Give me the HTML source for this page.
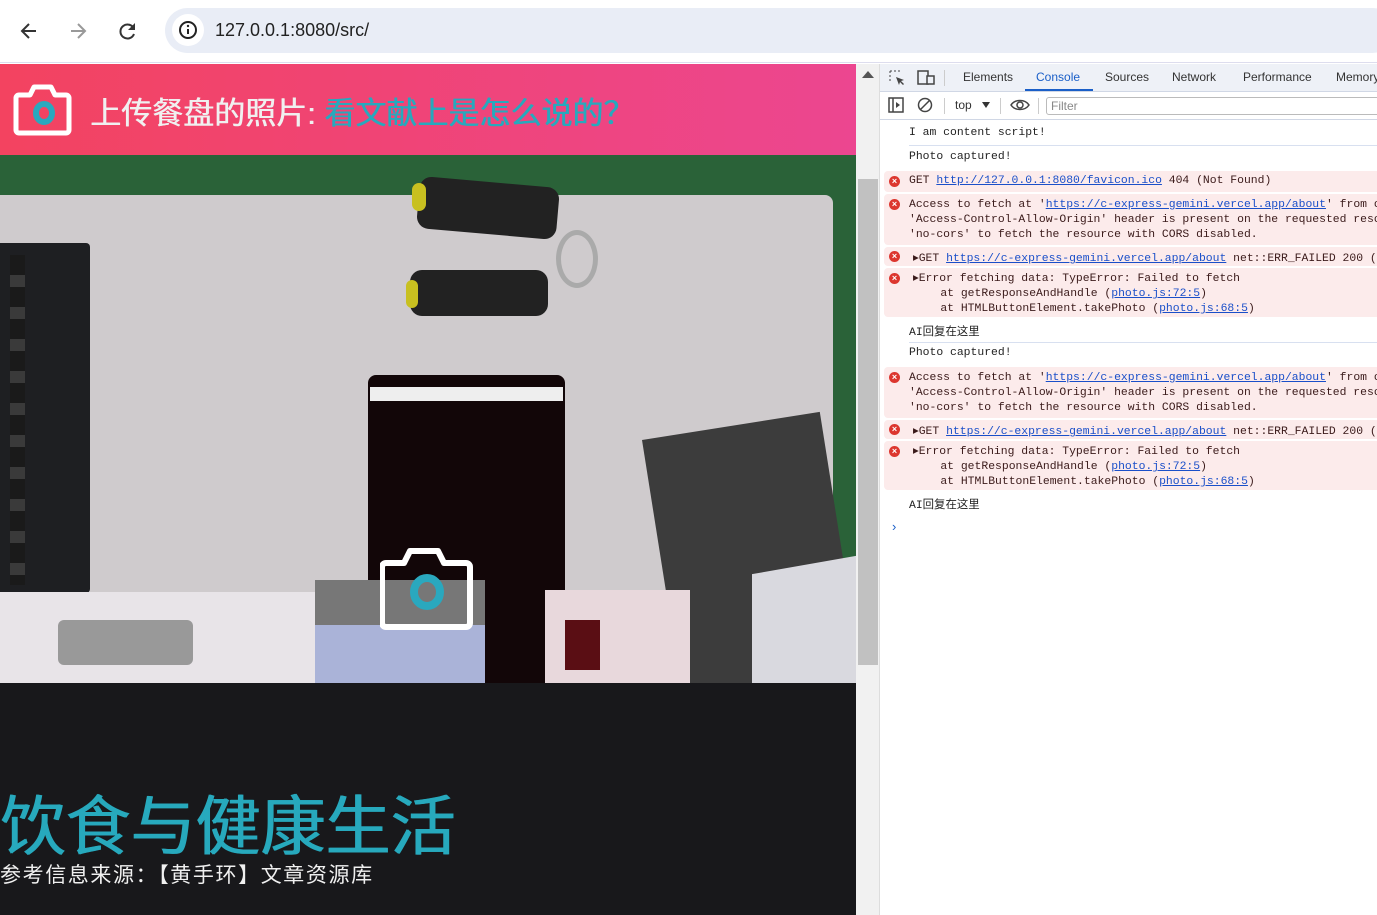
<!DOCTYPE html>
<html><head><meta charset="utf-8"><style>
*{margin:0;padding:0;box-sizing:border-box}
body{width:1377px;height:915px;overflow:hidden;background:#fff;font-family:"Liberation Sans","Noto Sans CJK SC",sans-serif;position:relative}
.abs{position:absolute}
.mono{font-family:"Liberation Mono","Noto Sans CJK SC",monospace;font-size:11.4px;color:#222;white-space:pre}
.err{background:#fcebeb;color:#3a1a1a;border-radius:4px}
.ic{position:absolute;left:9px;width:11px;height:11px;border-radius:50%;background:#dc362e;color:#fff;font:bold 9px/11px "Liberation Sans";text-align:center}
a{color:#1a4fc9;text-decoration:underline}
.tab{position:absolute;top:70px;font-size:12px;color:#333}
</style></head><body>
<div class="abs" style="left:0;top:0;width:1377px;height:63px;background:#fff;border-bottom:1px solid #dde"></div>
<svg class="abs" style="left:18px;top:20px" width="22" height="22" viewBox="0 0 22 22"><path d="M18 11H5M11 4l-7 7 7 7" stroke="#333" stroke-width="2" fill="none"/></svg>
<svg class="abs" style="left:67px;top:20px" width="22" height="22" viewBox="0 0 22 22"><path d="M4 11h13M11 4l7 7-7 7" stroke="#999" stroke-width="2" fill="none"/></svg>
<svg class="abs" style="left:117px;top:20px" width="22" height="22" viewBox="0 0 22 22"><path d="M17 9A7 7 0 1 0 17 14" stroke="#333" stroke-width="2" fill="none"/><path d="M18 3v7h-7z" fill="#333"/></svg>
<div class="abs" style="left:165px;top:8px;width:1230px;height:45px;border-radius:23px;background:#e9edf6"></div>
<div class="abs" style="left:172px;top:14px;width:32px;height:32px;border-radius:50%;background:#fff"></div>
<svg class="abs" style="left:178px;top:20px" width="20" height="20" viewBox="0 0 20 20"><circle cx="10" cy="10" r="8" stroke="#222" stroke-width="2" fill="none"/><path d="M10 9v5" stroke="#222" stroke-width="2"/><circle cx="10" cy="6" r="1.2" fill="#222"/></svg>
<div class="abs" style="left:215px;top:20px;font-size:18px;color:#222">127.0.0.1:8080/src/</div>

<div class="abs" style="left:0;top:64px;width:856px;height:91px;background:linear-gradient(90deg,#f34360,#ec4690)"></div>
<svg class="abs" style="left:13px;top:83px" width="60" height="53" viewBox="0 0 60 53"><path d="M7 12h10l4-8h17l4 8h11a3 3 0 0 1 3 3v32a3 3 0 0 1-3 3H6a3 3 0 0 1-3-3V15a3 3 0 0 1 3-3z" fill="none" stroke="#fff" stroke-width="5" stroke-linejoin="round"/><ellipse cx="31" cy="30" rx="8" ry="9" fill="none" stroke="#2aa8be" stroke-width="6"/></svg>
<div class="abs" style="left:90px;top:88px;font-size:31px;color:#f0f0f0;white-space:nowrap;text-shadow:0.6px 0 0 currentColor">上传餐盘的照片: <span style="color:#27a9bd">看文献上是怎么说的？</span></div>

<div class="abs" style="left:0;top:155px;width:856px;height:528px;background:#2a6238;overflow:hidden">
 <div class="abs" style="left:0;top:40px;width:833px;height:500px;background:#cfcbcd;border-radius:0 8px 0 0"></div>
 <div class="abs" style="left:0;top:88px;width:90px;height:350px;background:#1e1f22;border-radius:0 4px 4px 0"></div>
 <div class="abs" style="left:10px;top:100px;width:15px;height:330px;background:repeating-linear-gradient(#1a1a1a 0 20px,#3a3a3a 20px 32px)"></div>
 <div class="abs" style="left:418px;top:27px;width:140px;height:52px;background:#222;border-radius:12px;transform:rotate(5deg)"></div>
 <div class="abs" style="left:412px;top:28px;width:14px;height:28px;background:#c8c020;border-radius:7px"></div>
 <div class="abs" style="left:410px;top:115px;width:138px;height:46px;background:#222;border-radius:12px"></div>
 <div class="abs" style="left:406px;top:125px;width:12px;height:28px;background:#c8c020;border-radius:7px"></div>
 <div class="abs" style="left:556px;top:75px;width:42px;height:58px;border:5px solid #aaa;border-radius:50%"></div>
 <div class="abs" style="left:368px;top:220px;width:197px;height:320px;background:#120608;border-radius:8px"></div>
 <div class="abs" style="left:370px;top:232px;width:193px;height:14px;background:#eee"></div>
 <div class="abs" style="left:642px;top:285px;width:180px;height:300px;background:#3c3c3c;transform:rotate(-9deg);transform-origin:top left"></div>
 <div class="abs" style="left:752px;top:410px;width:104px;height:130px;background:#d9d9df;transform:skewY(-10deg)"></div>
 <div class="abs" style="left:0;top:437px;width:315px;height:100px;background:#e8e4e8"></div>
 <div class="abs" style="left:58px;top:465px;width:135px;height:45px;background:#999;border-radius:6px"></div>
 <div class="abs" style="left:315px;top:425px;width:170px;height:50px;background:#777"></div>
 <div class="abs" style="left:315px;top:470px;width:170px;height:60px;background:#aab3d8"></div>
 <div class="abs" style="left:545px;top:435px;width:145px;height:100px;background:#e8d8dc"></div>
 <div class="abs" style="left:565px;top:465px;width:35px;height:50px;background:#5a0e14"></div>
</div>
<svg class="abs" style="left:380px;top:543px" width="96" height="88" viewBox="0 0 96 88"><path d="M6 20h18l6-12h28l6 12h22a4 4 0 0 1 4 4v56a4 4 0 0 1-4 4H6a4 4 0 0 1-4-4V24a4 4 0 0 1 4-4z" fill="none" stroke="#fff" stroke-width="6" stroke-linejoin="round"/><ellipse cx="47" cy="49" rx="13" ry="14" fill="none" stroke="#2aa8be" stroke-width="8"/></svg>

<div class="abs" style="left:0;top:683px;width:856px;height:232px;background:#18181b"></div>
<div class="abs" style="left:0;top:787px;font-size:65px;line-height:80px;color:#27a9bd;white-space:nowrap;text-shadow:1.2px 0 0 currentColor">饮食与健康生活</div>
<div class="abs" style="left:0;top:862px;font-size:21px;line-height:28px;color:#f0f0f0;white-space:nowrap;letter-spacing:1.6px">参考信息来源：【黄手环】文章资源库</div>

<div class="abs" style="left:856px;top:64px;width:24px;height:851px;background:#f1f1f1;border-right:1px solid #ddd"></div>
<div class="abs" style="left:862px;top:71px;width:0;height:0;border-left:6px solid transparent;border-right:6px solid transparent;border-bottom:7px solid #555"></div>
<div class="abs" style="left:858px;top:179px;width:20px;height:486px;background:#c1c1c1"></div>

<div class="abs" style="left:880px;top:64px;width:497px;height:28px;background:#eef1f7;border-bottom:1px solid #d0d7e5"></div>
<svg class="abs" style="left:888px;top:69px" width="18" height="18" viewBox="0 0 18 18"><path d="M2 2h10M2 2v10" stroke="#444" stroke-dasharray="2 2" fill="none"/><path d="M8 8l8 3-3 1 3 3-1 1-3-3-1 3z" fill="#444"/></svg>
<svg class="abs" style="left:916px;top:69px" width="20" height="18" viewBox="0 0 20 18"><rect x="2" y="2" width="10" height="13" fill="none" stroke="#444" stroke-width="1.5"/><rect x="11" y="7" width="7" height="8" fill="#eef1f7" stroke="#444" stroke-width="1.5"/></svg>
<div class="abs" style="left:944px;top:70px;width:1px;height:16px;background:#ccc"></div>
<div class="tab" style="left:963px">Elements</div>
<div class="tab" style="left:1036px;color:#1a5fc8">Console</div>
<div class="abs" style="left:1025px;top:89px;width:68px;height:2px;background:#1a5fc8"></div>
<div class="tab" style="left:1105px">Sources</div>
<div class="tab" style="left:1172px">Network</div>
<div class="tab" style="left:1243px">Performance</div>
<div class="tab" style="left:1336px">Memory</div>
<div class="abs" style="left:880px;top:92px;width:497px;height:28px;background:#fff;border-bottom:1px solid #d0d7e5"></div>
<svg class="abs" style="left:888px;top:97px" width="16" height="16" viewBox="0 0 16 16"><rect x="1" y="1" width="14" height="14" fill="none" stroke="#444" stroke-width="1.5"/><path d="M5 1v14" stroke="#444" stroke-width="1.5"/><path d="M8 5l4 3-4 3z" fill="#444"/></svg>
<svg class="abs" style="left:917px;top:97px" width="16" height="16" viewBox="0 0 16 16"><circle cx="8" cy="8" r="6.5" fill="none" stroke="#444" stroke-width="1.5"/><path d="M3.5 12.5l9-9" stroke="#444" stroke-width="1.5"/></svg>
<div class="abs" style="left:944px;top:98px;width:1px;height:16px;background:#ccc"></div>
<div class="abs" style="left:955px;top:98px;font-size:12px;color:#333">top</div>
<div class="abs" style="left:982px;top:102px;border-left:4px solid transparent;border-right:4px solid transparent;border-top:6px solid #333"></div>
<div class="abs" style="left:1000px;top:98px;width:1px;height:16px;background:#ccc"></div>
<svg class="abs" style="left:1010px;top:98px" width="20" height="14" viewBox="0 0 20 14"><path d="M1 7C5 1 15 1 19 7C15 13 5 13 1 7z" fill="none" stroke="#444" stroke-width="1.5"/><circle cx="10" cy="7" r="3" fill="none" stroke="#444" stroke-width="1.5"/></svg>
<div class="abs" style="left:1038px;top:98px;width:1px;height:16px;background:#ccc"></div>
<div class="abs" style="left:1046px;top:97px;width:340px;height:18px;border:1px solid #bbb;border-radius:3px;font-size:12px;color:#888;padding-left:4px;line-height:16px">Filter</div>

<div class="abs" style="left:880px;top:121px;width:497px;height:794px;background:#fff">
 <div class="abs mono" style="left:29px;top:6px">I am content script!</div>
 <div class="abs" style="left:29px;top:24px;width:470px;height:1px;background:#d8e0f0"></div>
 <div class="abs mono" style="left:29px;top:30px">Photo captured!</div>
 <div class="abs err" style="left:4px;top:50px;width:500px;height:21px"></div>
 <div class="ic" style="top:55px">×</div>
 <div class="abs mono" style="left:29px;top:54px;color:#3a1a1a">GET <a>http://127.0.0.1:8080/favicon.ico</a> 404 (Not Found)</div>
 <div class="abs err" style="left:4px;top:73px;width:500px;height:51px"></div>
 <div class="ic" style="top:78px">×</div>
 <div class="abs mono" style="left:29px;top:77px;line-height:15px;color:#3a1a1a">Access to fetch at '<a>https://c-express-gemini.vercel.app/about</a>' from o
'Access-Control-Allow-Origin' header is present on the requested reso
'no-cors' to fetch the resource with CORS disabled.</div>
 <div class="abs err" style="left:4px;top:126px;width:500px;height:19px"></div>
 <div class="ic" style="top:130px">×</div>
 <div class="abs mono" style="left:33px;top:129px;color:#3a1a1a">▸GET <a>https://c-express-gemini.vercel.app/about</a> net::ERR_FAILED 200 (</div>
 <div class="abs err" style="left:4px;top:147px;width:500px;height:49px"></div>
 <div class="ic" style="top:152px">×</div>
 <div class="abs mono" style="left:33px;top:151px;line-height:15px;color:#3a1a1a">▸Error fetching data: TypeError: Failed to fetch
    at getResponseAndHandle (<a>photo.js:72:5</a>)
    at HTMLButtonElement.takePhoto (<a>photo.js:68:5</a>)</div>
 <div class="abs mono" style="left:29px;top:202px">AI回复在这里</div>
 <div class="abs" style="left:29px;top:221px;width:470px;height:1px;background:#d8e0f0"></div>
 <div class="abs mono" style="left:29px;top:226px">Photo captured!</div>
 <div class="abs err" style="left:4px;top:246px;width:500px;height:51px"></div>
 <div class="ic" style="top:251px">×</div>
 <div class="abs mono" style="left:29px;top:250px;line-height:15px;color:#3a1a1a">Access to fetch at '<a>https://c-express-gemini.vercel.app/about</a>' from o
'Access-Control-Allow-Origin' header is present on the requested reso
'no-cors' to fetch the resource with CORS disabled.</div>
 <div class="abs err" style="left:4px;top:299px;width:500px;height:19px"></div>
 <div class="ic" style="top:303px">×</div>
 <div class="abs mono" style="left:33px;top:302px;color:#3a1a1a">▸GET <a>https://c-express-gemini.vercel.app/about</a> net::ERR_FAILED 200 (</div>
 <div class="abs err" style="left:4px;top:320px;width:500px;height:49px"></div>
 <div class="ic" style="top:325px">×</div>
 <div class="abs mono" style="left:33px;top:324px;line-height:15px;color:#3a1a1a">▸Error fetching data: TypeError: Failed to fetch
    at getResponseAndHandle (<a>photo.js:72:5</a>)
    at HTMLButtonElement.takePhoto (<a>photo.js:68:5</a>)</div>
 <div class="abs mono" style="left:29px;top:375px">AI回复在这里</div>
 <div class="abs" style="left:12px;top:398px;color:#1a5fc8;font-size:13px">›</div>
</div>
</body></html>
